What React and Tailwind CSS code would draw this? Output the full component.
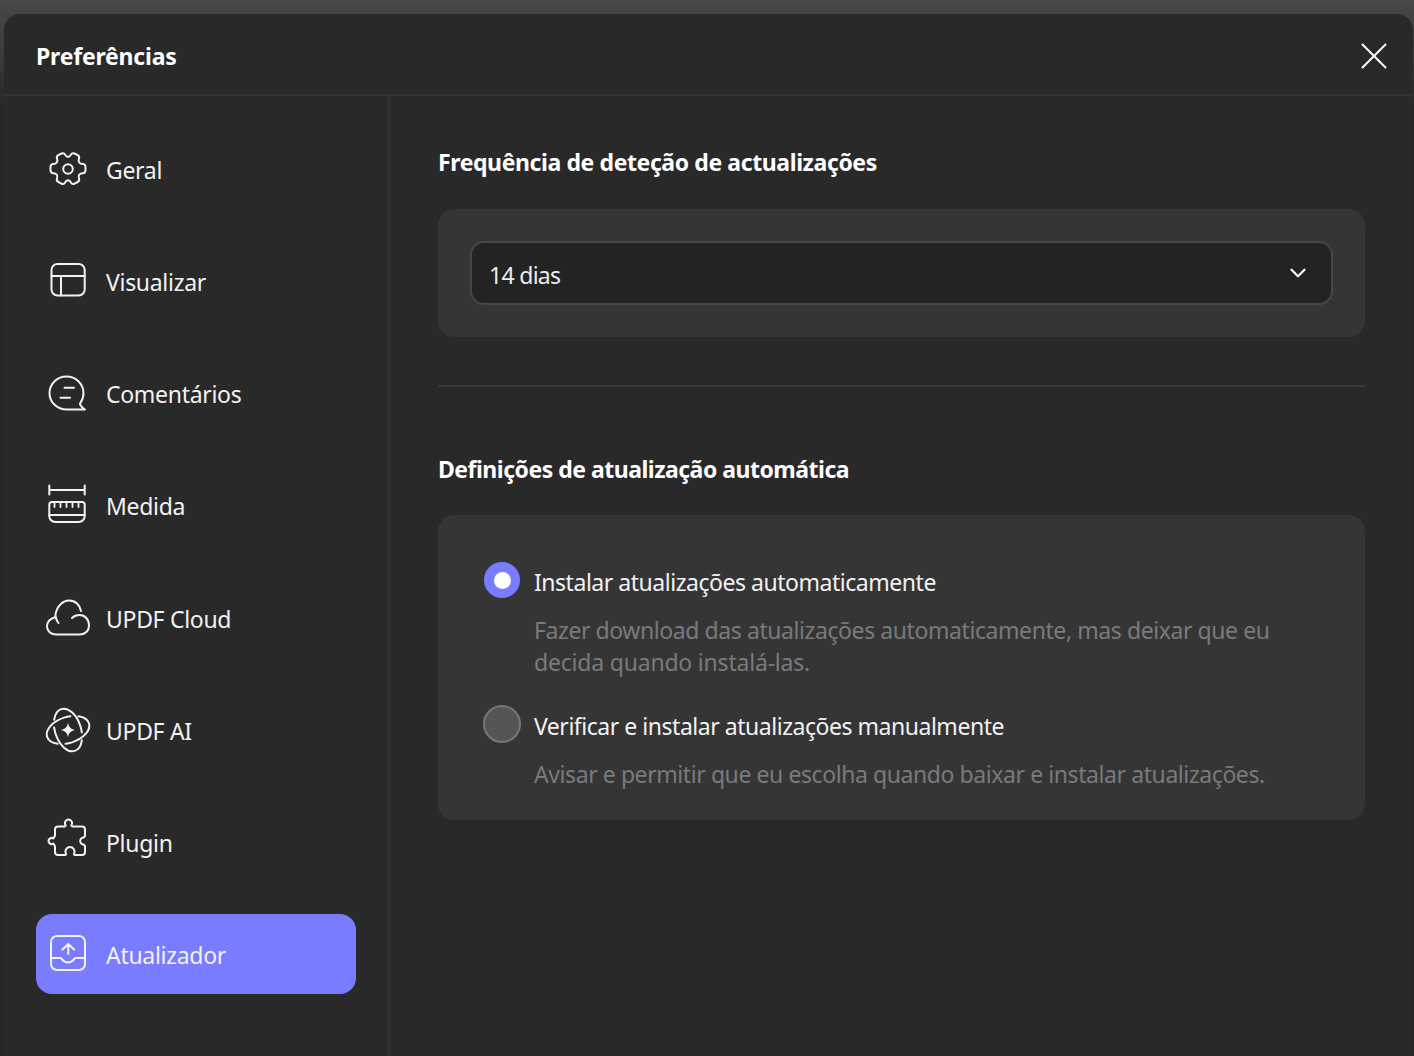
import { ChevronDown, X } from "lucide-react";

const strokeProps = {
  fill: "none",
  stroke: "currentColor",
  strokeWidth: 2,
  strokeLinecap: "round",
  strokeLinejoin: "round",
};

const NavIcon = ({ children }) => (
  <svg width="48" height="48" viewBox="0 0 48 48" className="shrink-0" {...strokeProps}>
    {children}
  </svg>
);

const GearIcon = () => (
  <NavIcon>
    <circle cx="24" cy="23" r="4.8" />
    <path d="M17.5 7.5c1.5-.6 3 0 3.6 1.2.7 1.5 1.7 2.2 2.9 2.2s2.200-.7 2.900-2.200c.6-1.200 2.100-1.800 3.600-1.200l3.200 1.700c1.300.8 1.800 2.200 1.300 3.500-.6 1.600-.5 2.800.2 3.800s1.900 1.500 3.500 1.500c1.400 0 2.500 1 2.700 2.300.2 1.500.2 3.100 0 4.600-.2 1.300-1.300 2.300-2.700 2.300-1.600 0-2.800.5-3.500 1.500s-.8 2.200-.2 3.800c.5 1.300 0 2.700-1.300 3.500l-3.200 1.700c-1.500.6-3 0-3.600-1.200-.7-1.500-1.700-2.200-2.900-2.200s-2.200.7-2.900 2.200c-.6 1.200-2.100 1.800-3.600 1.200l-3.200-1.700c-1.300-.8-1.800-2.200-1.300-3.500.6-1.600.5-2.800-.2-3.800s-1.900-1.500-3.500-1.500c-1.400 0-2.500-1-2.700-2.300-.2-1.500-.2-3.100 0-4.600.2-1.300 1.300-2.300 2.700-2.300 1.600 0 2.800-.5 3.500-1.500s.8-2.200.2-3.800c-.5-1.300 0-2.700 1.300-3.500z" />
  </NavIcon>
);

const LayoutIcon = () => (
  <NavIcon>
    <rect x="7.500" y="6" width="33.200" height="31.500" rx="6" />
    <path d="M7.500 18h33.200M17 18v19.500" />
  </NavIcon>
);

const CommentIcon = () => (
  <NavIcon>
    <path d="M41 39.500H22.500C13.500 39.500 5.500 32.500 5.500 23S13.500 6.500 22.500 6.500 39.500 13.500 39.500 23c0 4-1.300 7.500-3.500 10.500 0 2 2 4 5 6z" />
    <path d="M20.500 17.700h9.500M16.500 27.700h9.500" />
  </NavIcon>
);

const RulerIcon = () => (
  <NavIcon>
    <path d="M5.300 8h35.400M5.300 3.500v9M40.700 3.500v9" />
    <path d="M8 20h30a2.700 2.700 0 0 1 2.700 2.700V34a6 6 0 0 1-6 6H11.300a6 6 0 0 1-6-6V22.700A2.700 2.700 0 0 1 8 20z" />
    <path d="M5.300 33h35.400M10.500 20v5M16.500 20v5M22.500 20v5M28.500 20v5M34.500 20v5" strokeWidth="1.800" />
  </NavIcon>
);

const CloudIcon = () => (
  <NavIcon>
    <path d="M14.500 29C11.500 25 11 21 12 18 13.500 12 19 6.500 25 6.500 31.500 6.500 36 11 37 17" />
    <path d="M11.500 23C6.500 24.500 3 28 3 32.500 3 37 7 40.500 12 40.500H36C41 40.500 45 37 45 31.500 45 25.500 41 21 35.500 21 32.500 21 30 22 28 24" />
  </NavIcon>
);

const AiIcon = () => (
  <NavIcon>
    <ellipse cx="24" cy="24" rx="22" ry="13" transform="rotate(-18 24 24)" pathLength="100" strokeDasharray="43 7" strokeDashoffset="12" />
    <ellipse cx="24" cy="24" rx="22" ry="13" transform="rotate(72 24 24)" pathLength="100" strokeDasharray="43 7" strokeDashoffset="12" />
    <path d="M24 16.500c.7 4.500 2.400 6.300 7 7.500-4.600 1.200-6.300 3-7 7.500-.7-4.500-2.400-6.300-7-7.500 4.600-1.200 6.300-3 7-7.500z" fill="currentColor" stroke="none" />
  </NavIcon>
);

const PluginIcon = () => (
  <NavIcon>
    <path d="M14 8.500H20.700C21.500 8.500 21.800 7.500 21.500 7A3.500 3.500 0 1 1 27.500 7C27.200 7.500 27.500 8.500 28.300 8.500H38A3 3 0 0 1 41 11.500V17.500C41 18.500 40.300 18.800 39.700 19.500A3.500 3.500 0 1 0 39.700 26.500C40.300 27.200 41 27.500 41 28.500V34A3 3 0 0 1 38 37H31C30 37 29.700 36 30.200 35.200A4.500 4.500 0 1 0 21.800 35.200C22.300 36 22 37 21 37H14A3 3 0 0 1 11 34V28.500C11 27.500 10 27 9.300 25.500A3 3 0 1 1 9.300 20.500C10 19 11 18.500 11 17.500V11.500A3 3 0 0 1 14 8.500Z" />
  </NavIcon>
);

const UpdaterIcon = () => (
  <NavIcon>
    <rect x="7" y="6" width="34" height="34" rx="6" />
    <path d="M7 28h9.500c1.500 0 1.800 4.500 7.500 4.500s6-4.500 7.500-4.500H41" />
    <path d="M24.300 24V14M18.500 19.500l5.800-5.500 5.800 5.500" />
  </NavIcon>
);

const navItems = [
  { label: "Geral", icon: GearIcon },
  { label: "Visualizar", icon: LayoutIcon },
  { label: "Comentários", icon: CommentIcon },
  { label: "Medida", icon: RulerIcon },
  { label: "UPDF Cloud", icon: CloudIcon, low: true },
  { label: "UPDF AI", icon: AiIcon, low: true },
  { label: "Plugin", icon: PluginIcon, low: true },
  { label: "Atualizador", icon: UpdaterIcon, low: true, active: true },
];

const Sidebar = () => (
  <aside className="w-[386px] shrink-0 border-r-2 border-[#323234] pt-[34px] px-8 flex flex-col gap-8">
    {navItems.map(({ label, icon: Icon, active, low }) => (
      <div
        key={label}
        className={`h-20 w-80 flex items-center pl-2 rounded-2xl text-[23px] text-[#f2f2f2] ${active ? "bg-[#7a7cff]" : ""}`}
      >
        <Icon />
        <span className={`ml-[14px] tracking-[-0.3px] ${low ? "pt-0.5" : ""}`}>{label}</span>
      </div>
    ))}
  </aside>
);

const Option = ({ title, desc, checked }) => (
  <div className="flex">
    <div className="w-[46px] shrink-0 h-10 flex items-center">
      {checked ? (
        <div className="w-9 h-9 ml-px rounded-full bg-[#7a7cff] flex items-center justify-center">
          <div className="w-[17px] h-[17px] rounded-full bg-white" />
        </div>
      ) : (
        <div className="w-[38px] h-[38px] rounded-full bg-[#555557] border-2 border-[#77777a]" />
      )}
    </div>
    <div className="ml-[5px]">
      <div className="pt-[2px] text-[23px] leading-10 text-[#f2f2f2] tracking-[-0.47px]">{title}</div>
      <div className="mt-[12px] text-[23px] leading-8 text-[#7a7a7c] tracking-[-0.42px]">{desc}</div>
    </div>
  </div>
);

export default function App() {
  return (
    <div
      className="h-[1056px] overflow-hidden pt-[14px] pl-1 pr-px bg-[linear-gradient(180deg,#4a4a4a_0,#444444_14px,#3a3a3a_60px,#262626_110px)]"
      style={{ fontFamily: '"Noto Sans", "Open Sans", sans-serif' }}
    >
      <div className="h-[1060px] rounded-2xl bg-[#29292a] flex flex-col">
        <header className="h-[82px] shrink-0 border-b-2 border-[#343435] flex items-center justify-between pl-8 pr-4">
          <h1 className="pt-1 text-[23px] font-bold text-white tracking-[-0.2px]">Preferências</h1>
          <X size={46} strokeWidth={1.050} className="text-white mt-1" />
        </header>
        <div className="flex flex-1">
          <Sidebar />
          <main className="flex-1 px-12">
            <h2 className="mt-[48px] h-9 flex items-center text-[23px] font-bold text-white tracking-[-0.4px]">
              Frequência de deteção de actualizações
            </h2>
            <section className="mt-[29px] h-32 rounded-2xl bg-[#353536] px-8 flex items-center">
              <div className="w-full h-16 rounded-[14px] bg-[#232324] border-2 border-[#47474a] pl-[17px] pr-5 flex items-center justify-between">
                <span className="pt-1 text-[23px] text-[#ececec] tracking-[-0.7px]">14 dias</span>
                <ChevronDown size={26} strokeWidth={2.100} className="text-white" />
              </div>
            </section>
            <div className="mt-[48px] h-0.5 bg-[#39393a]" />
            <h2 className="mt-[64px] h-9 flex items-center text-[23px] font-bold text-white tracking-[-0.5px]">
              Definições de atualização automática
            </h2>
            <section className="mt-[28px] h-[305px] rounded-2xl bg-[#353536] pt-[45px] pl-[45px] pr-8 flex flex-col gap-[26px]">
              <Option
                checked
                title="Instalar atualizações automaticamente"
                desc={
                  <>
                    Fazer download das atualizações automaticamente, mas deixar que eu
                    <br />
                    <span className="tracking-[-0.2px]">decida quando instalá-las.</span>
                  </>
                }
              />
              <Option
                title="Verificar e instalar atualizações manualmente"
                desc="Avisar e permitir que eu escolha quando baixar e instalar atualizações."
              />
            </section>
          </main>
        </div>
      </div>
    </div>
  );
}
